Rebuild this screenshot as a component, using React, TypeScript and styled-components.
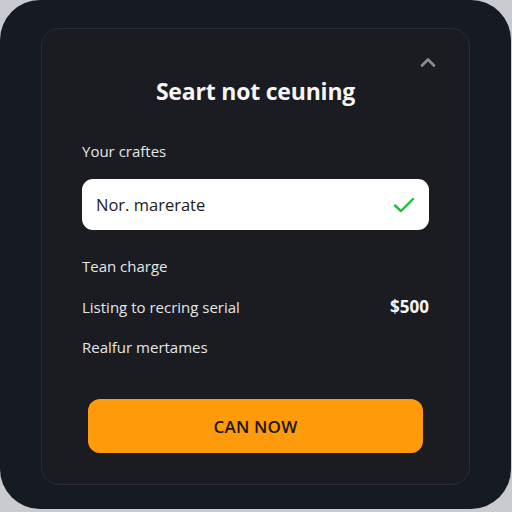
import styled, { createGlobalStyle } from "styled-components";

const GlobalStyle = createGlobalStyle`
  html, body {
    margin: 0;
    padding: 0;
    background: #c9cbcf;
  }
  body {
    font-family: "Open Sans", "Noto Sans", sans-serif;
  }
`;

const rows = [
  { label: "Tean charge" },
  { label: "Listing to recring serial", value: "$500" },
  { label: "Realfur mertames" },
];

const App = () => (
  <>
    <GlobalStyle />
    <Frame>
      <Card>
        <Header>
          <Title>Seart not ceuning</Title>
          <Collapse aria-label="collapse">
            <svg width="18" height="12" viewBox="0 0 18 12">
              <path
                d="M3 9.5 L9 3.5 L15 9.5"
                fill="none"
                stroke="#8b8e96"
                strokeWidth="2.6"
                strokeLinecap="round"
                strokeLinejoin="round"
              />
            </svg>
          </Collapse>
        </Header>

        <FieldLabel>Your craftes</FieldLabel>
        <Field>
          <FieldText>Nor. marerate</FieldText>
          <svg width="22" height="18" viewBox="0 0 22 18">
            <path
              d="M2 9.5 L8 15 L20 3"
              fill="none"
              stroke="#1fbf3a"
              strokeWidth="2.4"
              strokeLinecap="round"
              strokeLinejoin="round"
            />
          </svg>
        </Field>

        <Rows>
          {rows.map(({ label, value }) => (
            <Row key={label}>
              <RowLabel>{label}</RowLabel>
              {value && <RowValue>{value}</RowValue>}
            </Row>
          ))}
        </Rows>

        <CtaButton>CAN NOW</CtaButton>
      </Card>
    </Frame>
  </>
);

const Frame = styled.div`
  width: 511px;
  height: 509px;
  box-sizing: border-box;
  background: #161a21;
  border-radius: 40px;
  padding: 28px 41px 24px 41px;
`;

const Card = styled.div`
  width: 100%;
  height: 100%;
  box-sizing: border-box;
  background: #1a1c22;
  border: 1px solid #2a2d34;
  border-radius: 18px;
  padding: 0 40px 0 40px;
  display: flex;
  flex-direction: column;
`;

const Header = styled.div`
  position: relative;
  padding-top: 46px;
  display: flex;
  justify-content: center;
`;

const Title = styled.h1`
  margin: 0;
  font-size: 23px;
  line-height: 32px;
  font-weight: 700;
  color: #f6f6f6;
  letter-spacing: -0.2px;
`;

const Collapse = styled.button`
  position: absolute;
  top: 22px;
  right: -10px;
  width: 22px;
  height: 22px;
  padding: 0;
  border: none;
  background: none;
  display: flex;
  align-items: center;
  justify-content: center;
`;

const FieldLabel = styled.div`
  margin-top: 34px;
  font-size: 15px;
  line-height: 20px;
  color: #e6e6e6;
`;

const Field = styled.div`
  margin-top: 18px;
  height: 51px;
  flex-shrink: 0;
  box-sizing: border-box;
  background: #ffffff;
  border-radius: 11px;
  padding: 0 14px 0 14px;
  display: flex;
  align-items: center;
  justify-content: space-between;
`;

const FieldText = styled.span`
  font-size: 16.5px;
  color: #1b1b1b;
`;

const Rows = styled.div`
  margin-top: 25px;
  display: flex;
  flex-direction: column;
  gap: 18.5px;
`;

const Row = styled.div`
  display: flex;
  justify-content: space-between;
  align-items: center;
  height: 22px;
`;

const RowLabel = styled.span`
  font-size: 15px;
  color: #e6e6e6;
`;

const RowValue = styled.span`
  font-size: 17px;
  font-weight: 700;
  color: #f4f4f4;
`;

const CtaButton = styled.button`
  margin: 41px 6px 0 6px;
  height: 54px;
  flex-shrink: 0;
  border: none;
  border-radius: 12px;
  background: #ff9a0b;
  color: #1c1814;
  font-family: "Open Sans", "Noto Sans", sans-serif;
  font-size: 17px;
  font-weight: 600;
  letter-spacing: 0.2px;
`;

export default App;
